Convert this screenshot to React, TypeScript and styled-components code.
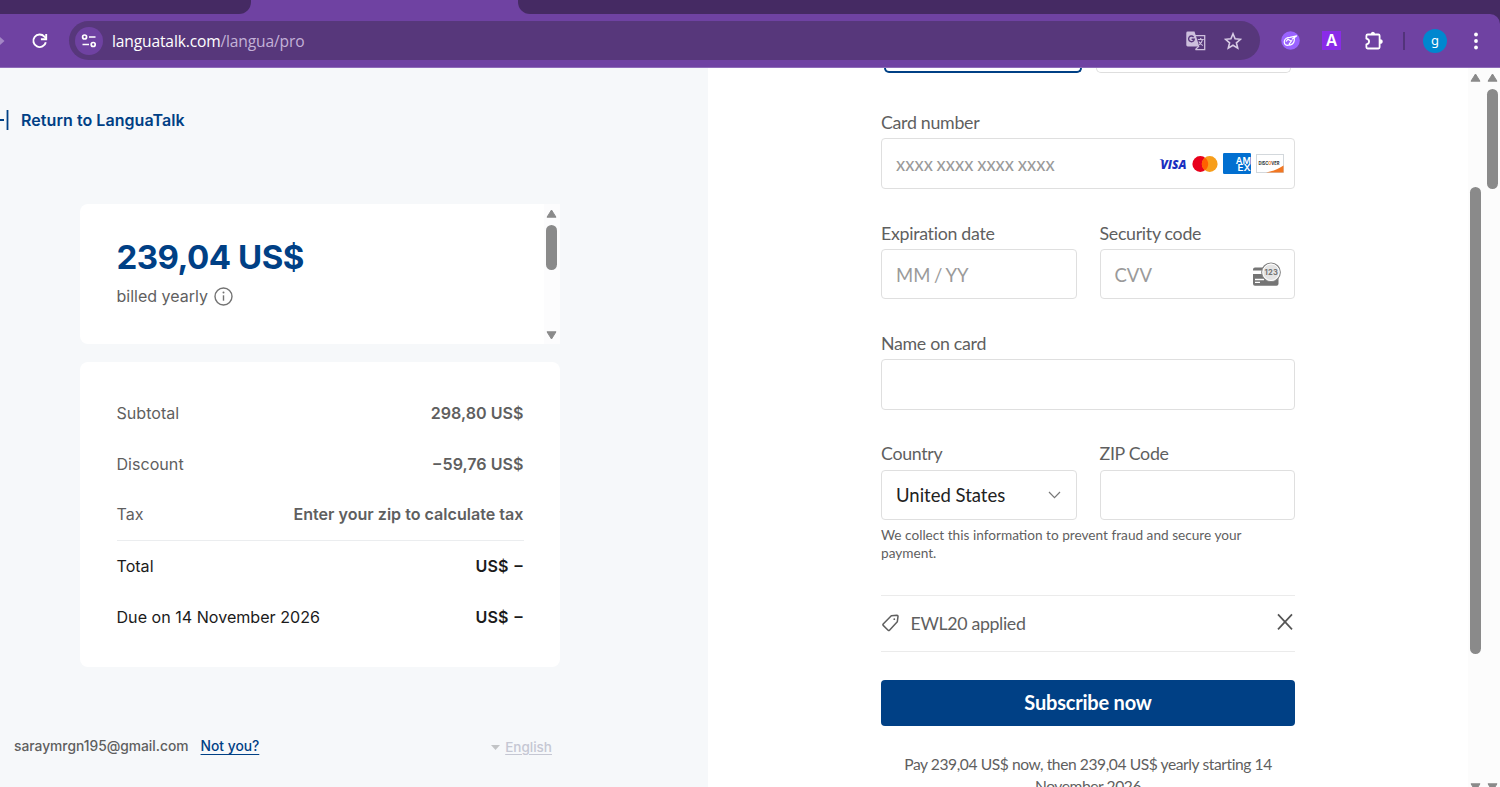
import React from "react";
import styled, { createGlobalStyle } from "styled-components";

const GlobalStyle = createGlobalStyle`
  *, *::before, *::after { box-sizing: border-box; }
  html, body { margin: 0; padding: 0; overflow: hidden; background: #fff; }
  svg { display: block; flex: none; }
`;

const inter = `Inter, "Liberation Sans", sans-serif`;
const lato = `Lato, "Liberation Sans", sans-serif`;
const navy = "#004085";
const grey = "#5f5f5f";

const Window = styled.div`
  display: flex;
  flex-direction: column;
  width: 1500px;
  height: 787px;
  overflow: hidden;
  background: #fff;
`;

/* ---------- browser chrome ---------- */

const TabStrip = styled.div`
  display: flex;
  justify-content: space-between;
  height: 14px;
  flex: none;
  background: #6f42a2;
`;

const InactiveTabs = styled.div<{ $width: number; $side: "left" | "right" }>`
  width: ${(p) => p.$width}px;
  height: 14px;
  background: #452a63;
  border-radius: ${(p) => (p.$side === "left" ? "0 0 12px 0" : "0 0 0 12px")};
`;

const Toolbar = styled.div`
  display: flex;
  align-items: center;
  height: 54px;
  background: #6f42a2;
  border-bottom: 1px solid #8e6bb8;
  border-radius: 0 10px 0 0;
`;

const ToolbarWrap = styled.div`
  flex: none;
  height: 54px;
  background: linear-gradient(90deg, #6f42a2 1400px, #452a63 1400px);
`;

const NavButtons = styled.div`
  display: flex;
  align-items: center;
  gap: 26px;
  width: 69px;
`;

const AddressBar = styled.div`
  display: flex;
  align-items: center;
  width: 1191px;
  height: 39px;
  padding: 0 18px 0 6px;
  border-radius: 20px;
  background: #57377b;
`;

const SiteInfo = styled.div`
  display: grid;
  place-items: center;
  width: 28px;
  height: 28px;
  margin-right: 9px;
  border-radius: 50%;
  background: #6f42a2;
`;

const Url = styled.div`
  flex: 1;
  font: 400 15.6px/22px "Open Sans", sans-serif;
  letter-spacing: -0.15px;
  color: #c3b1d7;
`;

const Host = styled.span`
  color: #fff;
`;

const BarActions = styled.div`
  display: flex;
  align-items: center;
  gap: 18px;
`;

const Extensions = styled.div`
  display: flex;
  align-items: center;
  padding-left: 21px;
`;

const LetterTile = styled.div`
  display: grid;
  place-items: center;
  width: 19px;
  height: 19px;
  margin: 0 23px 0 22px;
  background: #8a2be8;
  color: #fff;
  font: 600 16px/19px Inter, sans-serif;
`;

const Divider = styled.div`
  width: 2px;
  height: 18px;
  margin: 0 18px 0 19px;
  background: #52337a;
`;

const Avatar = styled.div`
  width: 24px;
  height: 24px;
  margin-right: 27px;
  border-radius: 50%;
  background: #0087cf;
  color: #fff;
  text-align: center;
  font: 400 13px/22px "Noto Sans", sans-serif;
`;

/* ---------- page ---------- */

const Page = styled.div`
  display: flex;
  flex: 1;
  min-height: 0;
`;

const Summary = styled.section`
  display: flex;
  flex-direction: column;
  width: 708px;
  padding-top: 40px;
  background: #f6f8fa;
  font-family: ${inter};
`;

const BackLink = styled.a`
  display: flex;
  align-items: center;
  gap: 12px;
  height: 24px;
  margin-bottom: 72px;
  color: ${navy};
  font-size: 16px;
  font-weight: 600;
  letter-spacing: 0.06px;
`;

const PriceCard = styled.div`
  display: flex;
  justify-content: space-between;
  width: 480px;
  height: 140px;
  margin: 0 0 18px 80px;
  padding-left: 36.5px;
  border-radius: 8px 0 0 8px;
  background: #fff;
`;

const Price = styled.div`
  margin-top: 31px;
  color: ${navy};
  font-size: 33px;
  line-height: 44px;
  font-weight: 700;
  letter-spacing: -0.5px;
  white-space: nowrap;
`;

const Billing = styled.div`
  display: flex;
  align-items: center;
  gap: 6px;
  height: 24px;
  margin-top: 5px;
  color: ${grey};
  font-size: 16px;
`;

const CardGutter = styled.div`
  display: flex;
  flex-direction: column;
  align-items: center;
  width: 16px;
  padding: 5px 1px 4px 0;
  background: #fcfcfd;
`;

const TotalsCard = styled.div`
  width: 480px;
  height: 305px;
  margin-left: 80px;
  padding: 26px 36.5px 0;
  border-radius: 8px;
  background: #fff;
`;

const Line = styled.div<{ $strong?: boolean; $ruled?: boolean }>`
  display: flex;
  align-items: center;
  justify-content: space-between;
  height: ${(p) => (p.$ruled ? 51.6 : 50.7)}px;
  padding-bottom: ${(p) => (p.$ruled ? 1.5 : 0)}px;
  border-bottom: ${(p) => (p.$ruled ? "1px solid #ebedef" : "none")};
  color: ${(p) => (p.$strong ? "#1b1b1b" : grey)};
  font-size: 16.1px;
`;

const Amount = styled.span<{ $pending?: boolean }>`
  font-weight: 600;
  word-spacing: ${(p) => (p.$pending ? 2 : 0)}px;
  padding-right: ${(p) => (p.$pending ? 1 : 0)}px;
`;

const Account = styled.footer`
  display: flex;
  align-items: center;
  width: 552px;
  height: 24px;
  margin-top: 67px;
  padding-left: 14px;
  color: ${grey};
  font-size: 13.8px;
  font-weight: 500;
`;

const NotYou = styled.a`
  margin-left: 12px;
  color: ${navy};
  font-size: 13.8px;
  text-decoration: underline;
  text-underline-offset: 3px;
`;

const Language = styled.div`
  display: flex;
  align-items: center;
  gap: 5px;
  margin: 2px 0 0 auto;
  color: #c5c7d3;
  font-size: 13.5px;
`;

const LanguageName = styled.span`
  text-decoration: underline;
  text-underline-offset: 2px;
`;

const Payment = styled.section`
  display: flex;
  flex-direction: column;
  flex: 1;
  padding: 0 173px;
  background: #fff;
  font-family: ${lato};
  color: ${grey};
`;

const Methods = styled.div`
  display: flex;
  flex: none;
  gap: 14px;
  height: 5px;
  padding: 0 4px 0 3px;
  margin-bottom: 36.2px;
`;

const Method = styled.div<{ $active?: boolean }>`
  flex: 1;
  border: ${(p) => (p.$active ? `2px solid ${navy}` : "1px solid #dedede")};
  border-top: 0;
  border-radius: 0 0 5px 5px;
`;

const FieldRow = styled.div<{ $last?: boolean }>`
  display: grid;
  grid-auto-flow: column;
  grid-auto-columns: 1fr;
  gap: 23px;
  height: ${(p) => (p.$last ? 85.4 : 110.4)}px;
  flex: none;
`;

const Field = styled.label`
  display: flex;
  flex-direction: column;
`;

const FieldLabel = styled.span`
  height: 29.3px;
  flex: none;
  font-size: 17.8px;
  line-height: 27px;
  letter-spacing: -0.3px;
`;

const InputBox = styled.div<{ $filled?: boolean }>`
  display: flex;
  align-items: center;
  justify-content: space-between;
  height: 50.5px;
  padding: 1px 11px 0 14px;
  border: 1px solid #dfdfdf;
  border-radius: 4px;
  background: #fff;
  color: ${(p) => (p.$filled ? "#222" : "#9a9a9a")};
  font-size: 18.5px;
  word-spacing: ${(p) => (p.$filled ? 0 : -1)}px;
`;

const BoxIcon = styled.span<{ $right: number }>`
  margin: -1px ${(p) => p.$right}px 0 0;
`;

const CardBrands = styled.div`
  display: flex;
  align-items: center;
  gap: 5px;
  margin: -1px -1px 0 0;
`;

const Hint = styled.p`
  width: 380px;
  margin: 0;
  flex: none;
  height: 68.8px;
  font-size: 13.65px;
  line-height: 18.4px;
`;

const Coupon = styled.div`
  display: flex;
  align-items: center;
  flex: none;
  height: 57px;
  margin-bottom: 28px;
  padding: 0 2px 1px 1px;
  border: solid #ebebeb;
  border-width: 1px 0;
  font-size: 17.8px;
  letter-spacing: -0.35px;
`;

const CouponName = styled.span`
  flex: 1;
  margin-left: 11.5px;
  line-height: 24px;
`;

const Subscribe = styled.button`
  flex: none;
  height: 46px;
  padding: 0 0 2px;
  border: 0;
  border-radius: 4px;
  background: ${navy};
  color: #fff;
  font: 700 20px/24px ${lato};
  letter-spacing: -0.2px;
`;

const Terms = styled.p`
  width: 390px;
  margin: 27px auto 0;
  text-align: center;
  font-size: 15.6px;
  line-height: 22.5px;
  letter-spacing: -0.42px;
`;

/* ---------- scroll bars ---------- */

const Gutter = styled.div<{ $nudge?: number }>`
  display: flex;
  flex-direction: column;
  align-items: center;
  width: 16px;
  padding: 5px ${(p) => p.$nudge ?? 0}px 0 0;
  background: #fcfcfc;
`;

const Thumb = styled.div<{ $top: number; $height: number }>`
  flex: none;
  width: 11px;
  height: ${(p) => p.$height}px;
  margin-top: ${(p) => p.$top}px;
  border-radius: 6px;
  background: #8a8a8a;
`;

const ArrowSlot = styled.div<{ $bottom?: number }>`
  margin: auto 0 ${(p) => p.$bottom ?? 0}px;
`;

const Arrow = ({ down }: { down?: boolean }) => (
  <svg width="11" height="9" viewBox="0 0 11 9">
    <path d={down ? "M1 .8h9L5.5 8z" : "M1 8.2h9L5.5 1z"} fill="#8a8a8a" stroke="#8a8a8a" strokeLinejoin="round" />
  </svg>
);

/* ---------- icons ---------- */

const ForwardTip = () => (
  <svg width="5" height="12" viewBox="0 0 5 12">
    <path d="M-1 1 4.500 6l-5.500 5z" fill="#a386c5" />
  </svg>
);

const Reload = () => (
  <svg width="18" height="18" viewBox="0 0 18 18" fill="none" stroke="#fff" strokeWidth="1.900">
    <path d="M14.800 10.200A6.300 6.300 0 1 1 13.400 4.600L15 6.200" />
    <path d="M15.200 2v5.300H9.900" />
  </svg>
);

const Tune = () => (
  <svg width="16" height="16" viewBox="0 0 16 16" fill="none" stroke="#fff" strokeWidth="1.700">
    <circle cx="3.600" cy="4" r="2" />
    <path d="M8 4h6.500M1.500 11.500H8" />
    <circle cx="12.200" cy="11.500" r="2" />
  </svg>
);

const Translate = () => (
  <svg width="20" height="20" viewBox="0 0 20 20">
    <path d="M9 4.700h9.700v14H9.500" fill="none" stroke="#cdbfdd" strokeWidth="1.300" />
    <path d="M1.700.5h6.800L13.300 15.500H1.700A1.400 1.400 0 0 1 .3 14.100V1.900A1.400 1.400 0 0 1 1.700.5z" fill="#cdbfdd" />
    <path d="M7.600 6.100A2.800 2.800 0 1 0 8.200 8.300H5.600" fill="none" stroke="#57377b" strokeWidth="1.400" />
    <path d="M11.800 8.500h6M14.700 7v1.500m1.800 0c-.5 2.500-2 4.300-3.300 5.300m-.3-3.300c.8 1.700 2.300 3.300 4 4M9.500 18.500l3.500-3.500" fill="none" stroke="#cdbfdd" strokeWidth="1.200" />
  </svg>
);

const Star = () => (
  <svg width="18" height="18" viewBox="0 0 18 18">
    <path d="m9 1.800 2.100 5 5.400.5-4.100 3.500 1.300 5.300L9 13.300l-4.700 2.800 1.300-5.300L1.500 7.300l5.400-.5z" fill="none" stroke="#d8cce5" strokeWidth="1.600" />
  </svg>
);

const HandBadge = () => (
  <svg width="19" height="19" viewBox="0 0 19 19">
    <circle cx="9.500" cy="9.500" r="9.300" fill="#9a63ff" />
    <path
      d="M15.600 4.800 9 6.300C6.200 6.300 3.300 8 3.200 11c.1 2.600 2 3.700 4.200 3.200 2.700-.2 5.300-1.800 5.800-4.400l.2-2.100M15.600 4.900 11.300 8M5.300 10.200l1.700-2 2.500 1.500M8.300 12.800l2.500-3.300"
      fill="none"
      stroke="#fff"
      strokeWidth="1.200"
      strokeLinecap="round"
      strokeLinejoin="round"
    />
  </svg>
);

const Puzzle = () => (
  <svg width="20" height="20" viewBox="0 0 20 20">
    <path d="M3.700 3.500h10.700q1.200 0 1.200 1.200v11.600q0 1.200-1.200 1.200H3.600q-1.200 0-1.200-1.200v-3c3.600-.8 3.600-4.800 0-5.600v-3q0-1.200 1.300-1.200z" fill="none" stroke="#fff" strokeWidth="1.800" strokeLinejoin="round" />
    <path d="M6.700 3.300a2.200 2.600 0 0 1 4.400 0zM16 8.200a2.700 2.300 0 0 1 0 4.600z" fill="#fff" />
  </svg>
);

const Dots = () => (
  <svg width="4" height="18" viewBox="0 0 4 18" fill="#fff">
    <circle cx="2" cy="2.500" r="1.900" />
    <circle cx="2" cy="9" r="1.900" />
    <circle cx="2" cy="15.500" r="1.900" />
  </svg>
);

const BackArrow = () => (
  <svg width="9" height="22" viewBox="0 0 9 22" stroke={navy} strokeWidth="1.800">
    <path d="M0 11h4M7.500 1v20" />
  </svg>
);

const Info = () => (
  <svg width="19" height="19" viewBox="0 0 19 19" fill="none" stroke="#737373" strokeWidth="1.400">
    <circle cx="9.500" cy="9.500" r="8.500" />
    <path d="M9.500 8.300v5.400" />
    <circle cx="9.500" cy="5.500" r="1" fill="#737373" stroke="none" />
  </svg>
);

const Visa = () => (
  <svg width="28" height="24" viewBox="0 -6 28 24">
    <text x="1.500" y="10.600" fontFamily="Open Sans, sans-serif" fontSize="13" fontWeight="800" fontStyle="italic" fill="#1a2fc0" textLength="26" lengthAdjust="spacingAndGlyphs">VISA</text>
    <path d="M.3 1.300h3.200l1.200 2z" fill="#1a2fc0" />
  </svg>
);

const Mastercard = () => (
  <svg width="26" height="16" viewBox="0 0 26 16">
    <circle cx="8.300" cy="8" r="7.900" fill="#e8001b" />
    <circle cx="17.700" cy="8" r="7.900" fill="#f79e1b" />
    <path d="M13 1.650a7.900 7.900 0 0 1 0 12.700 7.900 7.900 0 0 1 0-12.700z" fill="#ff5f00" />
  </svg>
);

const Amex = () => (
  <svg width="28" height="21" viewBox="0 0 28 21">
    <rect width="28" height="21" rx="1.200" fill="#016fd0" />
    <g fontFamily="Inter, sans-serif" fontWeight="600" fontSize="9.500" fill="#fff">
      <text x="12.800" y="10.600" textLength="15" lengthAdjust="spacingAndGlyphs">AM</text>
      <text x="14.600" y="17.900" textLength="13.200" lengthAdjust="spacingAndGlyphs">EX</text>
    </g>
  </svg>
);

const Discover = () => (
  <svg width="28" height="19" viewBox="0 0 28 19">
    <rect x=".5" y=".5" width="27" height="18" fill="#fff" stroke="#d3d8dc" />
    <path d="M27.500 11.500v7H10c7-1.300 13-3.800 17.500-7z" fill="#f27722" />
    <text x="2.500" y="10.800" fontFamily="Inter, sans-serif" fontWeight="700" fontSize="5" fill="#303438" textLength="21" lengthAdjust="spacingAndGlyphs">DISC<tspan fill="#f27722">O</tspan>VER</text>
  </svg>
);

const Cvv = () => (
  <svg width="29" height="25" viewBox="0 0 29 25">
    <path d="M1.500 5.500h25v16.300q0 2-2 2H3q-2 0-2-2V7.500q0-2 2-2z" fill="#757575" />
    <path d="M1 8.500h12v3.500H1z" fill="#fff" />
    <path d="M3 17.500h9M3 20.300h5" stroke="#fff" strokeWidth="1.300" />
    <circle cx="19" cy="10.300" r="9.300" fill="#e4e4e4" stroke="#858585" strokeWidth="1.200" />
    <circle cx="19" cy="10.300" r="8.200" fill="none" stroke="#fff" strokeWidth="1" />
    <text x="12.400" y="13.100" fontFamily="Inter, sans-serif" fontWeight="700" fontSize="7.500" fill="#757575" textLength="13.500">123</text>
  </svg>
);

const Chevron = () => (
  <svg width="13" height="8" viewBox="0 0 13 8">
    <path d="m1 1 5.500 5.700L12 1" fill="none" stroke="#777" strokeWidth="1.200" />
  </svg>
);

const Tag = () => (
  <svg width="17" height="18" viewBox="0 0 17 18" fill="none" stroke={grey} strokeWidth="1.500" strokeLinejoin="round">
    <path d="M9.300 1.700 15 1.300q1 0 1 1l-.7 5.500-7.800 8.400q-.7.600-1.400 0L1.200 11.400q-.6-.7 0-1.400z" />
    <circle cx="12.300" cy="5.200" r=".9" fill={grey} stroke="none" />
  </svg>
);

const Close = () => (
  <svg width="16" height="20" viewBox="0 0 16 20">
    <path d="m1 1.300 14 15M15 1.300l-14 15" stroke="#555" strokeWidth="1.700" />
  </svg>
);

const Caret = () => (
  <svg width="9" height="5" viewBox="0 0 9 5">
    <path d="M0 0h9L4.500 5z" fill="#c2c4c6" />
  </svg>
);

/* ---------- app ---------- */

export default function App() {
  return (
    <Window>
      <GlobalStyle />
      <TabStrip>
        <InactiveTabs $width={251} $side="left" />
        <InactiveTabs $width={982} $side="right" />
      </TabStrip>
      <ToolbarWrap>
        <Toolbar>
          <NavButtons>
            <ForwardTip />
            <Reload />
          </NavButtons>
          <AddressBar>
            <SiteInfo><Tune /></SiteInfo>
            <Url><Host>languatalk.com</Host>/langua/pro</Url>
            <BarActions>
              <Translate />
              <Star />
            </BarActions>
          </AddressBar>
          <Extensions>
            <HandBadge />
            <LetterTile>A</LetterTile>
            <Puzzle />
            <Divider />
            <Avatar>g</Avatar>
            <Dots />
          </Extensions>
        </Toolbar>
      </ToolbarWrap>

      <Page>
        <Summary>
          <BackLink><BackArrow />Return to LanguaTalk</BackLink>
          <PriceCard>
            <div>
              <Price>239,04 US$</Price>
              <Billing>billed yearly<Info /></Billing>
            </div>
            <CardGutter>
              <Arrow />
              <Thumb $top={7} $height={45} />
              <ArrowSlot><Arrow down /></ArrowSlot>
            </CardGutter>
          </PriceCard>
          <TotalsCard>
            <Line><span>Subtotal</span><Amount>298,80 US$</Amount></Line>
            <Line><span>Discount</span><Amount>−59,76 US$</Amount></Line>
            <Line $ruled><span>Tax</span><Amount>Enter your zip to calculate tax</Amount></Line>
            <Line $strong><span>Total</span><Amount $pending>US$ –</Amount></Line>
            <Line $strong><span>Due on 14 November 2026</span><Amount $pending>US$ –</Amount></Line>
          </TotalsCard>
          <Account>
            saraymrgn195@gmail.com
            <NotYou>Not you?</NotYou>
            <Language><Caret /><LanguageName>English</LanguageName></Language>
          </Account>
        </Summary>

        <Payment>
          <Methods>
            <Method $active />
            <Method />
          </Methods>
          <FieldRow>
            <Field>
              <FieldLabel>Card number</FieldLabel>
              <InputBox>
                xxxx xxxx xxxx xxxx
                <CardBrands><Visa /><Mastercard /><Amex /><Discover /></CardBrands>
              </InputBox>
            </Field>
          </FieldRow>
          <FieldRow>
            <Field>
              <FieldLabel>Expiration date</FieldLabel>
              <InputBox>MM / YY</InputBox>
            </Field>
            <Field>
              <FieldLabel>Security code</FieldLabel>
              <InputBox>CVV<BoxIcon $right={2}><Cvv /></BoxIcon></InputBox>
            </Field>
          </FieldRow>
          <FieldRow>
            <Field>
              <FieldLabel>Name on card</FieldLabel>
              <InputBox />
            </Field>
          </FieldRow>
          <FieldRow $last>
            <Field>
              <FieldLabel>Country</FieldLabel>
              <InputBox $filled>United States<BoxIcon $right={4}><Chevron /></BoxIcon></InputBox>
            </Field>
            <Field>
              <FieldLabel>ZIP Code</FieldLabel>
              <InputBox />
            </Field>
          </FieldRow>
          <Hint>We collect this information to prevent fraud and secure your payment.</Hint>
          <Coupon>
            <Tag />
            <CouponName>EWL20 applied</CouponName>
            <Close />
          </Coupon>
          <Subscribe>Subscribe now</Subscribe>
          <Terms>Pay 239,04 US$ now, then 239,04 US$ yearly starting 14 November 2026</Terms>
        </Payment>

        <Gutter $nudge={1.5}>
          <Arrow />
          <Thumb $top={105} $height={467} />
          <ArrowSlot $bottom={-5}><Arrow down /></ArrowSlot>
        </Gutter>
        <Gutter>
          <Arrow />
          <Thumb $top={7} $height={100} />
          <ArrowSlot $bottom={-5}><Arrow down /></ArrowSlot>
        </Gutter>
      </Page>
    </Window>
  );
}
